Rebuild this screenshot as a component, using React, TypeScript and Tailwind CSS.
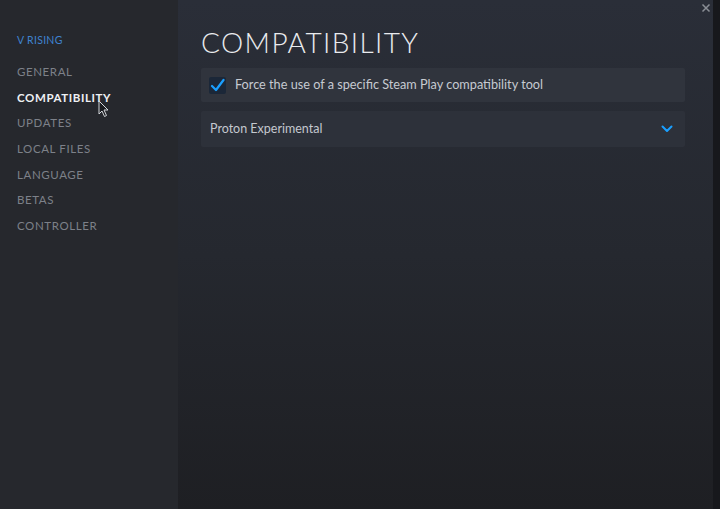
import React from "react";

const items = ["GENERAL", "COMPATIBILITY", "UPDATES", "LOCAL FILES", "LANGUAGE", "BETAS", "CONTROLLER"];

export default function App() {
  return (
    <div className="relative flex h-[509px] w-[720px] overflow-hidden bg-[#1e1f23]" style={{ fontFamily: "Lato, 'Open Sans', sans-serif" }}>
      <aside className="flex w-[178px] shrink-0 flex-col bg-[#26282d] pl-[17px] pt-[33px]">
        <div className="text-[10.5px] tracking-[0.3px] text-[#3f83d0]">V RISING</div>
        <nav className="mt-[10px] flex flex-col">
          {items.map((it) => (
            <div
              key={it}
              className={`relative flex h-[25.7px] items-center text-[11.5px] tracking-[0.6px] ${
                it === "COMPATIBILITY" ? "font-bold text-[#eef0f3]" : "text-[#7d8189]"
              }`}
            >
              {it}
              {it === "COMPATIBILITY" && (
                <svg className="absolute left-[81px] top-[16px]" width="12" height="18" viewBox="0 0 12 18">
                  <path d="M1 1 L1 14 L4 11 L6.5 16.5 L8.5 15.5 L6 10 L10 10 Z" fill="#1b1c20" stroke="#d5d8dc" strokeWidth="1" />
                </svg>
              )}
            </div>
          ))}
        </nav>
      </aside>
      <main className="flex flex-1 flex-col bg-gradient-to-b from-[#2a2e38] via-[#25282f] to-[#1e1f23] pl-[23px] pr-[28px] pt-[24px]">
        <h1 className="text-[28px] font-light leading-[36px] tracking-[1.4px] text-[#e9ebee]">COMPATIBILITY</h1>
        <div className="mt-[8px] flex h-[34px] items-center rounded-[2px] bg-[#30343d] pl-[8px]">
          <div className="flex h-[17px] w-[17px] items-center justify-center rounded-[2px] bg-[#1b2738]">
            <svg width="15" height="15" viewBox="0 0 15 15">
              <path d="M2 8 L6 12 L13.5 2" fill="none" stroke="#1a9fff" strokeWidth="2.2" strokeLinecap="round" strokeLinejoin="round" />
            </svg>
          </div>
          <span className="ml-[9px] text-[12.7px] text-[#c6cad1]">Force the use of a specific Steam Play compatibility tool</span>
        </div>
        <div className="mt-[9px] flex h-[36px] items-center justify-between rounded-[2px] bg-[#2d313a] pl-[9px] pr-[12px]">
          <span className="text-[12.5px] text-[#c4c8cf]">Proton Experimental</span>
          <svg width="12" height="8" viewBox="0 0 12 8">
            <path d="M1.5 1.5 L6 6 L10.5 1.5" fill="none" stroke="#1a9fff" strokeWidth="2" strokeLinecap="round" strokeLinejoin="round" />
          </svg>
        </div>
      </main>
      <div className="w-[7px] shrink-0 bg-[#17181c]" />
      <svg className="absolute left-[701px] top-[3px]" width="10" height="10" viewBox="0 0 10 10">
        <path d="M1.5 1.5 L8.5 8.5 M8.5 1.5 L1.5 8.5" stroke="#8a8e95" strokeWidth="1.5" />
      </svg>
    </div>
  );
}
